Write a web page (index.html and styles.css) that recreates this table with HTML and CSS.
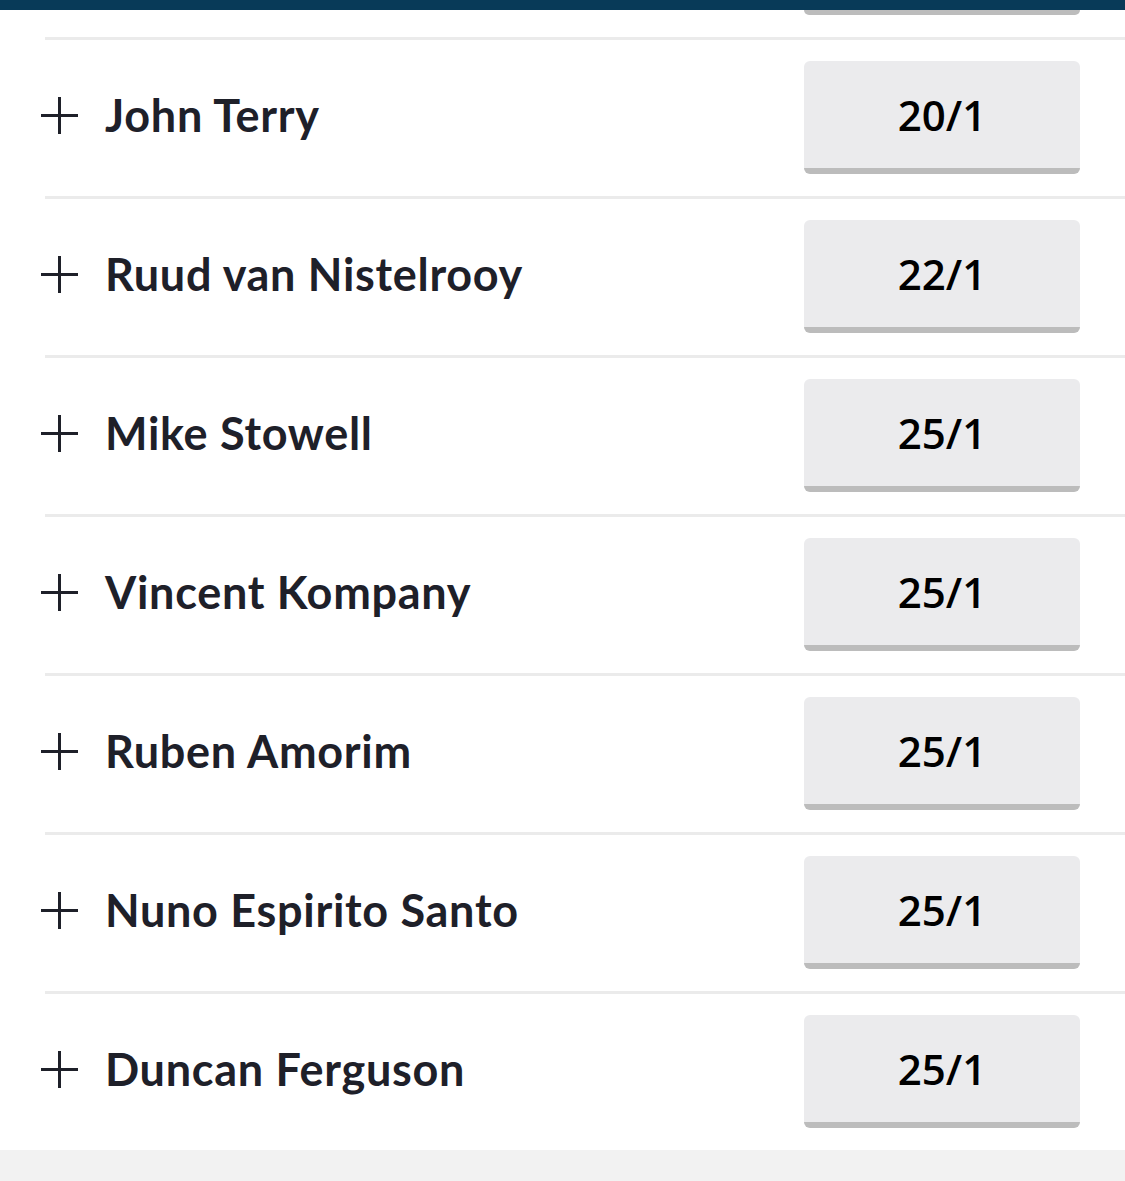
FILE: index.html
```html
<!DOCTYPE html>
<html lang="en">
<head>
<meta charset="utf-8">
<title>Odds list</title>
<link rel="stylesheet" href="styles.css">
</head>
<body>
<header class="topbar"></header>
<main class="market">
  <div class="peek"><span class="peek-btn"></span></div>
  <div class="sep"></div>
  <div class="row">
    <div class="runner"><svg class="plus" viewBox="0 0 37 37"><path d="M0 18.5H37M18.5 0V37"/></svg><span class="name">John Terry</span></div>
    <button class="odds">20/1</button>
  </div>
  <div class="sep"></div>
  <div class="row">
    <div class="runner"><svg class="plus" viewBox="0 0 37 37"><path d="M0 18.5H37M18.5 0V37"/></svg><span class="name">Ruud van Nistelrooy</span></div>
    <button class="odds">22/1</button>
  </div>
  <div class="sep"></div>
  <div class="row">
    <div class="runner"><svg class="plus" viewBox="0 0 37 37"><path d="M0 18.5H37M18.5 0V37"/></svg><span class="name">Mike Stowell</span></div>
    <button class="odds">25/1</button>
  </div>
  <div class="sep"></div>
  <div class="row">
    <div class="runner"><svg class="plus" viewBox="0 0 37 37"><path d="M0 18.5H37M18.5 0V37"/></svg><span class="name">Vincent Kompany</span></div>
    <button class="odds">25/1</button>
  </div>
  <div class="sep"></div>
  <div class="row">
    <div class="runner"><svg class="plus" viewBox="0 0 37 37"><path d="M0 18.5H37M18.5 0V37"/></svg><span class="name">Ruben Amorim</span></div>
    <button class="odds">25/1</button>
  </div>
  <div class="sep"></div>
  <div class="row">
    <div class="runner"><svg class="plus" viewBox="0 0 37 37"><path d="M0 18.5H37M18.5 0V37"/></svg><span class="name">Nuno Espirito Santo</span></div>
    <button class="odds">25/1</button>
  </div>
  <div class="sep"></div>
  <div class="row">
    <div class="runner"><svg class="plus" viewBox="0 0 37 37"><path d="M0 18.5H37M18.5 0V37"/></svg><span class="name">Duncan Ferguson</span></div>
    <button class="odds">25/1</button>
  </div>
</main>
<footer class="foot"></footer>
</body>
</html>
```
FILE: styles.css
```css
* { box-sizing: border-box; }
html, body { margin: 0; padding: 0; background: #ffffff; }
body { font-family: "Lato", "Open Sans", sans-serif; height: 1181px; overflow: hidden; }

.topbar { height: 10px; background: #083a58; }

.market { background: #ffffff; }

.peek { display: flex; justify-content: flex-end; padding-right: 45px; height: 27px; }
.peek-btn { display: block; width: 276px; height: 5px; background: #bcbcbc; border-radius: 0 0 6px 6px; }

.sep { height: 3px; margin-left: 45px; background: #ebebeb; }

.row {
  display: flex;
  align-items: center;
  justify-content: space-between;
  padding: 21px 45px 22px 41px;
}

.runner { display: flex; align-items: center; gap: 27px; padding-bottom: 5px; }
.plus { width: 37px; height: 37px; flex: none; }
.plus path { stroke: #1e2029; stroke-width: 3; fill: none; }

.name {
  font-family: "Lato", sans-serif;
  font-weight: 700;
  font-size: 45px;
  letter-spacing: 0.7px;
  color: #1e2029;
  line-height: 1;
}

.odds {
  width: 276px;
  height: 113px;
  border: none;
  border-bottom: 6px solid #bcbcbc;
  border-radius: 6px;
  background: #ebebed;
  font-family: "Open Sans", sans-serif;
  font-weight: 600;
  font-size: 42px;
  color: #000000;
  padding: 0;
  margin: 0;
}

.foot { height: 31px; background: #f2f2f2; }
```
